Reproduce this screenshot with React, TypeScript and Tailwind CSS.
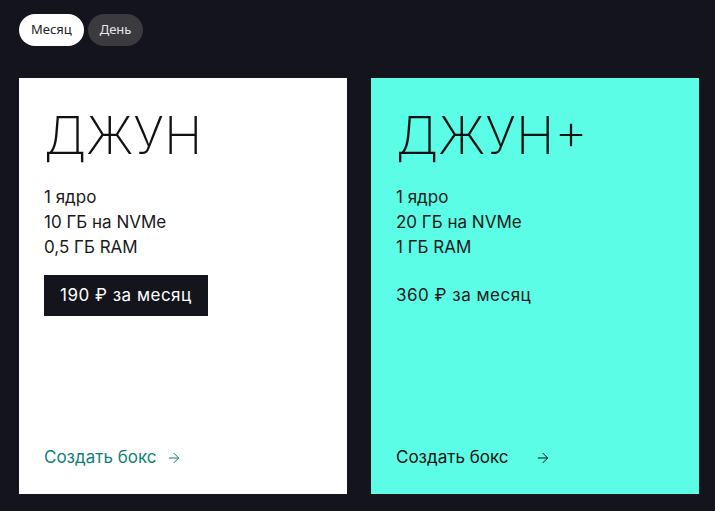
import { ArrowRight } from "lucide-react";

interface Plan {
  name: string;
  specs: string[];
  price: string;
  highlighted: boolean;
}

const plans: Plan[] = [
  { name: "ДЖУН", specs: ["1 ядро", "10 ГБ на NVMe", "0,5 ГБ RAM"], price: "190 ₽ за месяц", highlighted: false },
  { name: "ДЖУН+", specs: ["1 ядро", "20 ГБ на NVMe", "1 ГБ RAM"], price: "360 ₽ за месяц", highlighted: true },
];

function PlanCard({ plan }: { plan: Plan }) {
  return (
    <div
      className={`flex h-[416px] w-[328px] shrink-0 flex-col px-[25px] pt-[30px] pb-[24px] ${
        plan.highlighted ? "bg-[#5cfde6]" : "bg-white"
      }`}
    >
      <h2 className="text-[52px] leading-[56px] font-extralight text-[#111]">{plan.name}</h2>

      {/* Specs */}
      <ul className="mt-[21px] text-[17px] leading-[25px] text-[#1a1a1a]">
        {plan.specs.map((s) => (
          <li key={s}>{s}</li>
        ))}
      </ul>

      {/* Price */}
      <div className="mt-[15px]">
        {plan.highlighted ? (
          <span className="inline-block py-2 text-[17px] leading-[25px] tracking-[0.5px] text-[#1a1a1a]">
            {plan.price}
          </span>
        ) : (
          <span className="inline-block bg-[#13141c] px-4 py-2 text-[17px] leading-[25px] tracking-[0.5px] text-white">
            {plan.price}
          </span>
        )}
      </div>

      <a
        href="#"
        className={`mt-auto flex items-center text-[17px] leading-[25px] ${
          plan.highlighted ? "gap-[26px] text-[#111]" : "gap-[9px] text-[#0f8074]"
        }`}
      >
        Создать бокс
        <ArrowRight size={16} strokeWidth={1.5} />
      </a>
    </div>
  );
}

export default function App() {
  return (
    <div className="min-h-[511px] bg-[#13141c] pt-[14px] pr-4 pl-[19px] font-['Inter',sans-serif]">
      {/* Period toggle */}
      <div className="flex gap-1 font-['Noto_Sans',sans-serif] text-[13px]">
        <button className="h-8 rounded-full bg-white px-3 text-[#222]">Месяц</button>
        <button className="h-8 rounded-full bg-[#3a3a3f] px-3 text-[#e6e6e6]">День</button>
      </div>

      <div className="mt-8 flex gap-6">
        {plans.map((p) => (
          <PlanCard key={p.name} plan={p} />
        ))}
      </div>
    </div>
  );
}
